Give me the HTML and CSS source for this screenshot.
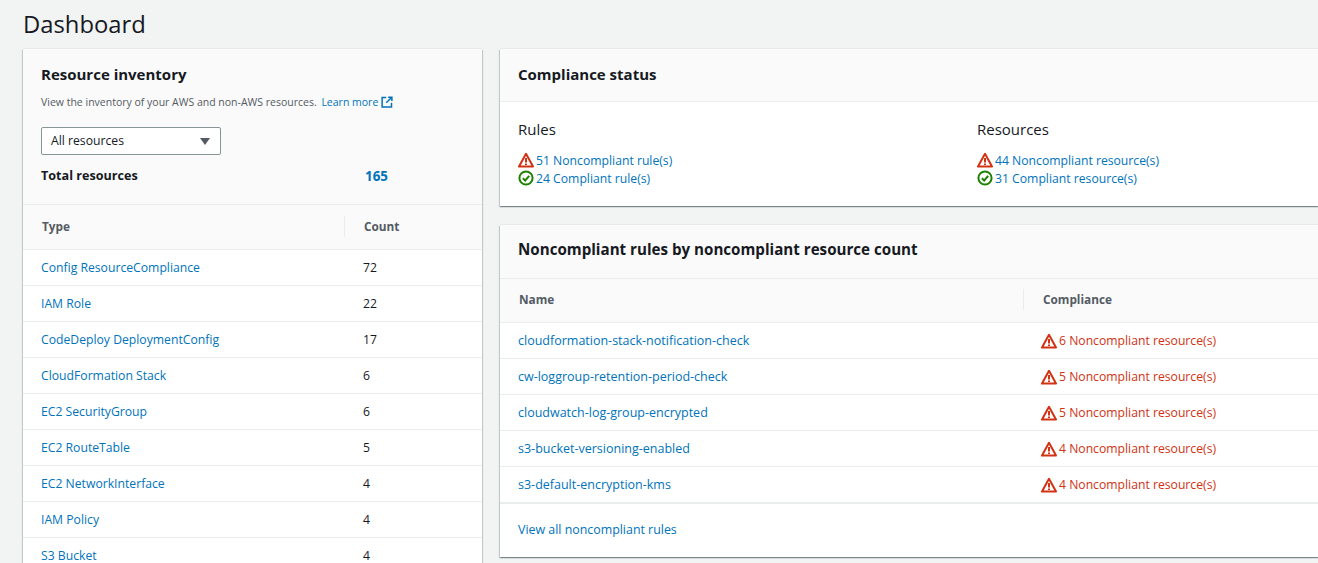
FILE: index.html
```html
<!DOCTYPE html>
<html lang="en">
<head>
    <meta charset="UTF-8">
    <meta name="viewport" content="width=device-width, initial-scale=1.0">
    <title>Dashboard</title>
    <link rel="stylesheet" href="styles.css">
</head>
<body>

<svg class="icon-defs" width="0" height="0" aria-hidden="true">
    <symbol id="warn" viewBox="0 0 16 16">
        <path d="M8 1.8 1 14.6h14z" fill="none" stroke="#d13212" stroke-width="2" stroke-linejoin="round"/>
        <path d="M8 6v4.5M8 11.4v1.6" fill="none" stroke="#d13212" stroke-width="2"/>
    </symbol>
    <symbol id="ok" viewBox="0 0 16 16">
        <circle cx="8" cy="8" r="6.6" fill="none" stroke="#1d8102" stroke-width="2"/>
        <path d="M4.8 8.2 7.2 10.5 11.2 5.8" fill="none" stroke="#1d8102" stroke-width="2"/>
    </symbol>
</svg>

<h1 class="page-title">Dashboard</h1>

<div class="layout">
    <!-- Left column -->
    <section class="card inventory">
        <div class="inventory-head">
            <h2>Resource inventory</h2>
            <p class="desc">View the inventory of your AWS and non-AWS resources. <a href="#" class="learn">Learn more<svg class="ext-icon" width="12" height="12" viewBox="0 0 16 16"><path d="M7 2H1.5v12.5H14V9" fill="none" stroke="#0073bb" stroke-width="2"/><path d="M9.5 1.5h5v5M14 2 7 9" fill="none" stroke="#0073bb" stroke-width="2"/></svg></a></p>
            <div class="select">
                <span>All resources</span>
                <i class="caret"></i>
            </div>
            <div class="total">
                <strong>Total resources</strong>
                <a href="#">165</a>
            </div>
        </div>
        <div class="inv-row inv-header">
            <span class="inv-type">Type</span>
            <span class="inv-count">Count</span>
        </div>
        <div class="inv-row"><a href="#" class="inv-type">Config ResourceCompliance</a><span class="inv-count">72</span></div>
        <div class="inv-row"><a href="#" class="inv-type">IAM Role</a><span class="inv-count">22</span></div>
        <div class="inv-row"><a href="#" class="inv-type">CodeDeploy DeploymentConfig</a><span class="inv-count">17</span></div>
        <div class="inv-row"><a href="#" class="inv-type">CloudFormation Stack</a><span class="inv-count">6</span></div>
        <div class="inv-row"><a href="#" class="inv-type">EC2 SecurityGroup</a><span class="inv-count">6</span></div>
        <div class="inv-row"><a href="#" class="inv-type">EC2 RouteTable</a><span class="inv-count">5</span></div>
        <div class="inv-row"><a href="#" class="inv-type">EC2 NetworkInterface</a><span class="inv-count">4</span></div>
        <div class="inv-row"><a href="#" class="inv-type">IAM Policy</a><span class="inv-count">4</span></div>
        <div class="inv-row"><a href="#" class="inv-type">S3 Bucket</a><span class="inv-count">4</span></div>
    </section>

    <!-- Right column -->
    <div class="right">
        <section class="card status">
            <div class="card-head"><h2>Compliance status</h2></div>
            <div class="status-body">
                <div class="status-col">
                    <h3>Rules</h3>
                    <a href="#" class="status-link"><svg class="icon"><use href="#warn"/></svg>51 Noncompliant rule(s)</a>
                    <a href="#" class="status-link"><svg class="icon"><use href="#ok"/></svg>24 Compliant rule(s)</a>
                </div>
                <div class="status-col">
                    <h3>Resources</h3>
                    <a href="#" class="status-link"><svg class="icon"><use href="#warn"/></svg>44 Noncompliant resource(s)</a>
                    <a href="#" class="status-link"><svg class="icon"><use href="#ok"/></svg>31 Compliant resource(s)</a>
                </div>
            </div>
        </section>

        <section class="card rules">
            <div class="card-head"><h2>Noncompliant rules by noncompliant resource count</h2></div>
            <div class="rule-row rule-header">
                <span class="rule-name">Name</span>
                <span class="rule-comp">Compliance</span>
            </div>
            <div class="rule-row"><a href="#" class="rule-name">cloudformation-stack-notification-check</a><span class="rule-comp"><svg class="icon"><use href="#warn"/></svg>6 Noncompliant resource(s)</span></div>
            <div class="rule-row"><a href="#" class="rule-name">cw-loggroup-retention-period-check</a><span class="rule-comp"><svg class="icon"><use href="#warn"/></svg>5 Noncompliant resource(s)</span></div>
            <div class="rule-row"><a href="#" class="rule-name">cloudwatch-log-group-encrypted</a><span class="rule-comp"><svg class="icon"><use href="#warn"/></svg>5 Noncompliant resource(s)</span></div>
            <div class="rule-row"><a href="#" class="rule-name">s3-bucket-versioning-enabled</a><span class="rule-comp"><svg class="icon"><use href="#warn"/></svg>4 Noncompliant resource(s)</span></div>
            <div class="rule-row"><a href="#" class="rule-name">s3-default-encryption-kms</a><span class="rule-comp"><svg class="icon"><use href="#warn"/></svg>4 Noncompliant resource(s)</span></div>
            <div class="card-foot"><a href="#">View all noncompliant rules</a></div>
        </section>
    </div>
</div>

</body>
</html>
```

FILE: styles.css
```css
/* Page */
html, body {
    height: 563px;
    overflow: hidden;
}

body {
    margin: 0;
    width: 1318px;
    background-color: #f2f3f3;
    color: #16191f;
    font-family: 'Open Sans', 'Noto Sans', sans-serif;
    font-size: 12.2px;
}

a {
    color: #0073bb;
    text-decoration: none;
}

.icon-defs {
    display: block;
    height: 0;
}

.page-title {
    margin: 0;
    height: 49px;
    padding-left: 23px;
    font-size: 23.8px;
    font-weight: 400;
    line-height: 48px;
}

.layout {
    display: flex;
    align-items: flex-start;
    gap: 18px;
    padding-left: 23px;
}

/* Cards */
.card {
    background-color: white;
    box-shadow: 0 1px 1px 0 rgba(0, 28, 36, 0.3), 1px 1px 1px 0 rgba(0, 28, 36, 0.15), -1px 1px 1px 0 rgba(0, 28, 36, 0.15), 0 -1px 0 0 rgba(0, 28, 36, 0.04);
}

.card h2 {
    margin: 0;
    font-size: 15px;
    font-weight: 700;
}

.card-head {
    height: 52px;
    display: flex;
    align-items: center;
    padding-left: 18px;
    background-color: #fafafa;
    border-bottom: 1px solid #eaeded;
}

.card-head h2 {
    margin-top: -2px;
}

.rules .card-head {
    height: 53px;
}

.rules .card-head h2 {
    margin-top: -5px;
    font-size: 15.15px;
}

/* Resource inventory */
.inventory {
    width: 459px;
    flex-shrink: 0;
}

.inventory-head {
    height: 156px;
    box-sizing: border-box;
    padding: 15px 18px 0;
    background-color: #fafafa;
    border-bottom: 1px solid #eaeded;
}

.desc {
    margin: 9px 0 0;
    color: #545b64;
    font-size: 10.5px;
    line-height: 18px;
}

.learn {
    margin-left: 2px;
}

.ext-icon {
    margin-left: 3px;
    vertical-align: -2px;
}

.select {
    width: 180px;
    height: 28px;
    box-sizing: border-box;
    margin-top: 16px;
    padding: 0 10px 0 9px;
    display: flex;
    align-items: center;
    justify-content: space-between;
    background-color: white;
    border: 1px solid #879596;
    border-radius: 2px;
}

.select span {
    margin-top: -2px;
}

.caret {
    width: 0;
    height: 0;
    border-left: 5px solid transparent;
    border-right: 5px solid transparent;
    border-top: 7px solid #545b64;
}

.total {
    display: flex;
    margin-top: 12px;
    font-size: 12.6px;
    line-height: 18px;
}

.total strong {
    width: 324px;
}

.total a {
    font-size: 13.4px;
    font-weight: 700;
}

.inv-row {
    height: 36px;
    display: flex;
    align-items: center;
    border-bottom: 1px solid #eaeded;
    box-sizing: border-box;
    padding-left: 18px;
}

.inv-type {
    width: 322px;
    flex-shrink: 0;
}

.inv-header {
    height: 45px;
    padding-bottom: 2px;
    background-color: #fafafa;
    color: #545b64;
    font-size: 11.8px;
    font-weight: 700;
}

.inv-header .inv-type {
    padding-left: 1px;
    width: 302px;
}

.inv-header .inv-count {
    padding-left: 19px;
    border-left: 1px solid #eaeded;
    line-height: 21px;
}

/* Compliance status */
.right {
    width: 818px;
    flex-shrink: 0;
    display: flex;
    flex-direction: column;
    gap: 19px;
}

.status-body {
    height: 104px;
    display: flex;
    padding-left: 18px;
    box-sizing: border-box;
}

.status-col {
    width: 459px;
    flex-shrink: 0;
    display: flex;
    flex-direction: column;
}

.status-col h3 {
    margin: 17px 0 12px;
    font-size: 15px;
    font-weight: 400;
    line-height: 20px;
}

.status-link {
    display: flex;
    align-items: center;
    height: 18px;
}

.icon {
    width: 16px;
    height: 16px;
    margin-right: 2px;
    flex-shrink: 0;
}

/* Noncompliant rules table */
.rule-row {
    height: 36px;
    box-sizing: border-box;
    display: flex;
    align-items: center;
    padding-left: 18px;
    border-bottom: 1px solid #eaeded;
}

.rule-name {
    width: 523px;
    flex-shrink: 0;
    font-size: 12.5px;
}

.rule-comp {
    display: flex;
    align-items: center;
    color: #d13212;
}

.rule-header {
    height: 44px;
    padding-bottom: 2px;
    background-color: #fafafa;
    color: #545b64;
    font-size: 11.8px;
    font-weight: 700;
    line-height: 21px;
}

.rule-header .rule-name {
    padding-left: 1px;
    width: 504px;
    font-size: 11.8px;
}

.rule-header .rule-comp {
    padding-left: 19px;
    border-left: 1px solid #eaeded;
    color: #545b64;
}

.card-foot {
    height: 54px;
    box-sizing: border-box;
    display: flex;
    align-items: center;
    padding-left: 18px;
    padding-bottom: 2px;
    font-size: 12.4px;
    border-top: 1px solid #eaeded;
}
```
